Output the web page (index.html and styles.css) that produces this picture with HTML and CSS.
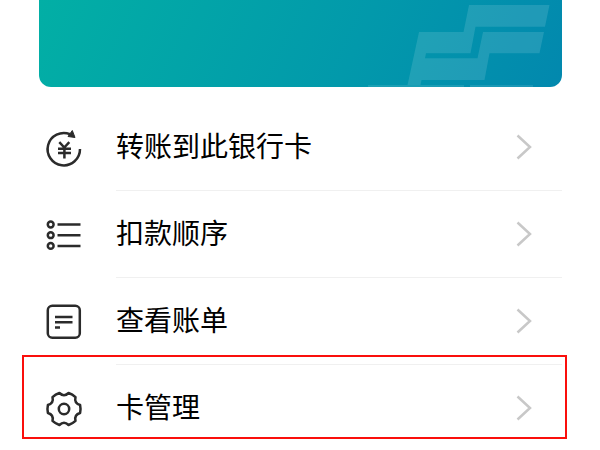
FILE: index.html
```html
<!DOCTYPE html>
<html lang="zh-CN">
<head>
<meta charset="utf-8">
<meta name="viewport" content="width=device-width, initial-scale=1">
<title>银行卡</title>
<link rel="stylesheet" href="styles.css">
</head>
<body>
<main class="page">
  <section class="card" aria-label="银行卡">
    <svg class="card-mark" viewBox="0 0 166 87" aria-hidden="true">
      <path d="M73 5H153.500L149 26.700H79.500L74.500 53.300H30L29 58.300H81.500L87 32H148L143.500 53.300H93.500L88.500 80H25.500L24.500 85H11.500L23 32H67.500Z"/>
      <path class="faint" d="M-28 85H68V87H-28ZM74 85H137V87H74Z"/>
    </svg>
  </section>
  <nav>
    <ul class="menu">
      <li class="item">
        <a class="row" href="#transfer">
          <svg class="icon" viewBox="0 0 36 36" aria-hidden="true">
            <path d="M34 19A16.200 16.200 0 1 1 24 4.200"/>
            <path class="solid" d="M26.300 .5L29 7.500L22 6.500Z"/>
            <path d="M13.300 12.200L18.300 17.500L23.300 12.200M12 18.800H25M12 23H25M18.400 17.500V28.500"/>
          </svg>
          <span class="label">转账到此银行卡</span>
          <svg class="chevron" viewBox="0 0 16 26" aria-hidden="true"><path d="M1.500 1.500L14 13L1.500 24.500"/></svg>
        </a>
      </li>
      <li class="item">
        <a class="row" href="#order">
          <svg class="icon" viewBox="0 0 36 36" aria-hidden="true">
            <circle cx="4.700" cy="7.500" r="2.900"/><circle cx="4.700" cy="18.200" r="2.900"/><circle cx="4.700" cy="28.900" r="2.900"/>
            <path d="M11.500 7.500H34.500M11.500 18.200H34.500M11.500 28.900H34.500"/>
          </svg>
          <span class="label">扣款顺序</span>
          <svg class="chevron" viewBox="0 0 16 26" aria-hidden="true"><path d="M1.500 1.500L14 13L1.500 24.500"/></svg>
        </a>
      </li>
      <li class="item">
        <a class="row" href="#bills">
          <svg class="icon" viewBox="0 0 36 36" aria-hidden="true">
            <rect x="1.800" y="1.800" width="32" height="32" rx="4.500"/>
            <path d="M9 13H26.500M9 18.300H26.500M9 23.600H14"/>
          </svg>
          <span class="label">查看账单</span>
          <svg class="chevron" viewBox="0 0 16 26" aria-hidden="true"><path d="M1.500 1.500L14 13L1.500 24.500"/></svg>
        </a>
      </li>
      <li class="item marked">
        <a class="row" href="#manage">
          <svg class="icon" viewBox="0 0 36 36" aria-hidden="true">
            <path d="M34.100 14Q35 18 34.100 22Q28 23.750 29.500 29.900Q26.500 32.700 22.600 34Q18 29.500 13.400 34Q9.500 32.700 6.500 29.900Q8 23.750 1.900 22Q1 18 1.900 14Q8 12.250 6.500 6.100Q9.500 3.300 13.400 2Q18 6.500 22.600 2Q26.500 3.300 29.500 6.100Q28 12.250 34.100 14Z"/>
            <circle cx="18" cy="18" r="5.200"/>
          </svg>
          <span class="label">卡管理</span>
          <svg class="chevron" viewBox="0 0 16 26" aria-hidden="true"><path d="M1.500 1.500L14 13L1.500 24.500"/></svg>
        </a>
      </li>
    </ul>
  </nav>
</main>
</body>
</html>
```
FILE: styles.css
```css
* {
  box-sizing: border-box;
}

body {
  margin: 0;
  background: #fff;
  color: #000;
  font-family: "Noto Sans CJK SC", sans-serif;
}

.page {
  padding: 0 38px 0 39px;
}

.card {
  display: flex;
  justify-content: flex-end;
  margin-bottom: 16px;
  border-radius: 0 0 12px 12px;
  background: linear-gradient(115deg, #02afa5, #0299ab 60%, #0288ae);
  overflow: hidden;
}

.card-mark {
  width: 166px;
  height: 87px;
  overflow: visible;
  fill: #fff;
  fill-opacity: 0.12;
}

.card-mark .faint {
  fill-opacity: 0.1;
}

.menu {
  margin: 0;
  padding: 0;
  list-style: none;
}

.item {
  position: relative;
}

.row {
  display: flex;
  align-items: center;
  height: 87px;
  padding: 0 30px 0 7px;
  color: inherit;
  text-decoration: none;
}

.item + .item::before {
  content: "";
  position: absolute;
  top: 0;
  left: 77px;
  right: 0;
  height: 1px;
  background: #f0f0f0;
}

.icon {
  width: 36px;
  height: 36px;
  margin: 3px 34px 0 0;
  overflow: visible;
  fill: none;
  stroke: #2b2b2b;
  stroke-width: 2.5;
  stroke-linejoin: round;
}

.icon .solid {
  fill: #2b2b2b;
  stroke-width: 1;
}

.label {
  flex: 1;
  padding-bottom: 3px;
  font-size: 28px;
  line-height: 40px;
}

.chevron {
  width: 16px;
  height: 26px;
  fill: none;
  stroke: #c8c8c8;
  stroke-width: 2.5;
}

.marked::after {
  content: "";
  position: absolute;
  top: -9px;
  right: -5px;
  bottom: 12px;
  left: -17px;
  border: 2px solid #fa0f0c;
  pointer-events: none;
}
```
